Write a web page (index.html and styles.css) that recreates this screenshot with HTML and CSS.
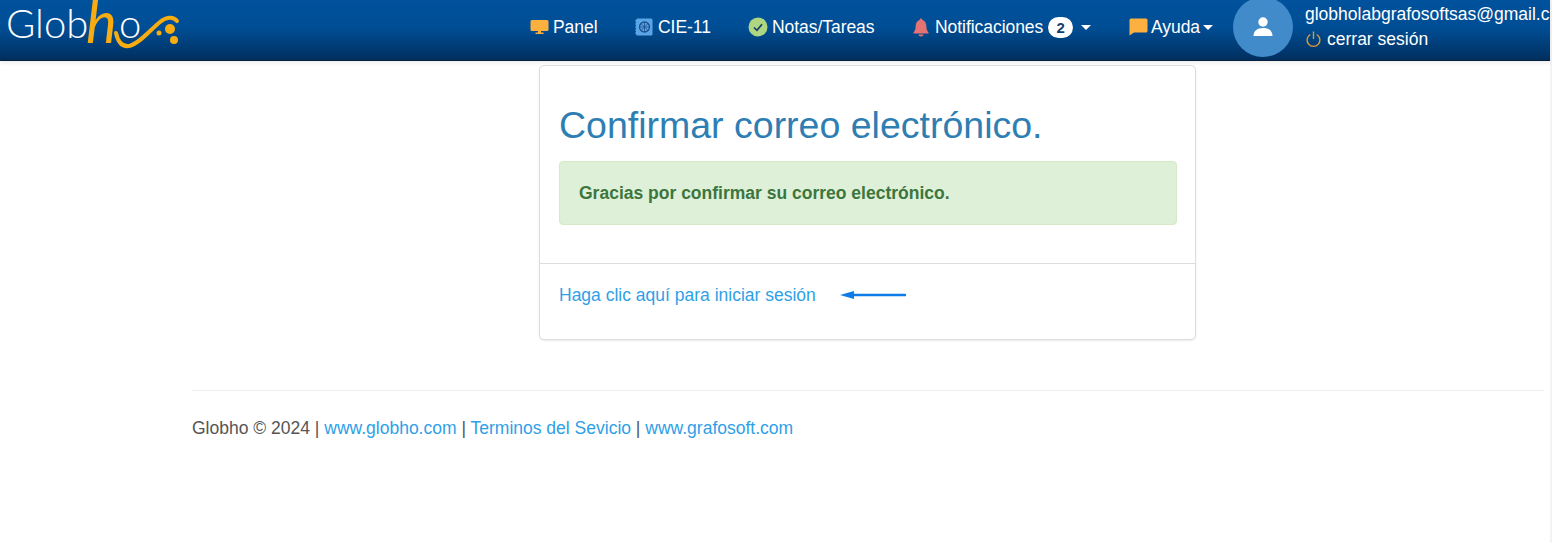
FILE: index.html
```html
<!DOCTYPE html>
<html lang="es">
<head>
  <meta charset="UTF-8">
  <title>Confirmar correo electrónico</title>
  <link rel="stylesheet" href="styles.css">
</head>
<body>

  <div class="page">

    <nav class="navbar">
      <a class="brand" href="#">
        <svg width="190" height="60" viewBox="0 0 190 60">
          <text class="brand-text" x="6" y="38">Glob</text>
          <text class="brand-text" x="119" y="38">o</text>
          <text class="brand-h" x="86" y="43">h</text>
          <path class="brand-swoosh" d="M116 33 C118 42 122 47 129 46 C139 44 150 30 160 22 C166 17 173 16 177 21"/>
          <circle class="brand-dot" cx="170" cy="29" r="5"/>
          <circle class="brand-dot" cx="159" cy="33" r="2.5"/>
          <circle class="brand-dot" cx="174" cy="40" r="4"/>
        </svg>
      </a>

      <ul class="menu">
        <li class="menu-item item-panel">
          <svg class="icon" width="19" height="16" viewBox="0 0 19 16"><path fill="#fbb040" d="M2 1h15a1.500 1.500 0 0 1 1.500 1.500v8a1.500 1.500 0 0 1-1.500 1.500H2a1.500 1.500 0 0 1-1.500-1.500v-8A1.500 1.500 0 0 1 2 1z"/><path fill="#fbb040" d="M8 12h3v1.500h2.500V15h-8v-1.500H8z"/></svg>
          Panel
        </li>
        <li class="menu-item item-cie">
          <svg class="icon" width="18" height="18" viewBox="0 0 18 18"><rect x="1" y="0.500" width="16.500" height="17" rx="1.500" fill="#5aa5e6"/><path d="M0 3h2M0 6h2M0 9h2M0 12h2M0 15h2" stroke="#5aa5e6" stroke-width="1"/><circle cx="9.500" cy="9" r="5" fill="none" stroke="#1c4f8c" stroke-width="1.300"/><path d="M4.500 9h10M9.500 4v10M6 5.500l7 7M13 5.500l-7 7" stroke="#1c4f8c" stroke-width="0.800"/></svg>
          CIE-11
        </li>
        <li class="menu-item item-notas">
          <svg class="icon" width="20" height="20" viewBox="0 0 20 20"><circle cx="10" cy="10" r="9.500" fill="#aed581"/><path d="M6 10.500l3 2.800 5-6" fill="none" stroke="#123f6e" stroke-width="1.700"/></svg>
          Notas/Tareas
        </li>
        <li class="menu-item item-notif">
          <svg class="icon icon-bell" width="16" height="19" viewBox="0 0 16 19"><path fill="#e57373" d="M8 0.500a1.300 1.300 0 0 1 1.300 1.400C12 2.600 13.300 5 13.300 8c0 3.500 1 5 2.200 6.500v1H0.500v-1C1.700 13 2.700 11.500 2.700 8c0-3 1.300-5.400 4-6.100A1.300 1.300 0 0 1 8 0.500z"/><path fill="#e57373" d="M5.500 16.500h5a2.500 2 0 0 1-5 0z"/></svg>
          Notificaciones
          <span class="badge">2</span>
          <span class="caret caret-notif"></span>
        </li>
        <li class="menu-item item-ayuda">
          <svg class="icon" width="19" height="18" viewBox="0 0 19 18"><path fill="#fbb040" d="M2 0.500h15A1.500 1.500 0 0 1 18.500 2v11a1.500 1.500 0 0 1-1.500 1.500H5L0.500 17.500V2A1.500 1.500 0 0 1 2 0.500z"/></svg>
          Ayuda<span class="caret"></span>
        </li>
      </ul>

      <div class="avatar">
        <svg width="20" height="20" viewBox="0 0 20 20"><circle cx="10" cy="5" r="4.700" fill="#fff"/><path fill="#fff" d="M0.500 19c0-5 3.500-8 9.500-8s9.500 3 9.500 8z"/></svg>
      </div>

      <div class="user">
        <div class="user-mail">globholabgrafosoftsas@gmail.com</div>
        <div class="user-exit">
          <svg width="15" height="17" viewBox="0 0 14 16"><path d="M4 3.300a6 6 0 1 0 6 0M7 0.500v7" fill="none" stroke="#d99a3c" stroke-width="1.300"/></svg>
          cerrar sesión
        </div>
      </div>
    </nav>

    <div class="container">
      <div class="card">
        <div class="card-body">
          <h1>Confirmar correo electrónico.</h1>
          <div class="alert">Gracias por confirmar su correo electrónico.</div>
        </div>
        <div class="card-footer">
          <a href="#">Haga clic aquí para iniciar sesión</a>
          <svg class="arrow" width="66" height="10" viewBox="0 0 66 10"><path d="M65 5H12" stroke="#0d7be8" stroke-width="2.600" stroke-linecap="round"/><path d="M0 5l14-4v8z" fill="#0d7be8"/></svg>
        </div>
      </div>

      <hr>

      <footer class="footer">
        Globho © 2024 | <a href="#">www.globho.com</a> | <a href="#">Terminos del Sevicio</a> | <a href="#">www.grafosoft.com</a>
      </footer>
    </div>

  </div>

</body>
</html>
```

FILE: styles.css
```css
* {
  box-sizing: border-box;
}

html, body {
  height: 100%;
}

body {
  margin: 0;
  background-color: #f3f3f3;
  font-family: "Liberation Sans", Arial, sans-serif;
  font-size: 17.5px;
  color: #555;
  overflow: hidden;
}

a {
  color: #2f9fe8;
  text-decoration: none;
}

.page {
  width: 1550px;
  height: 100%;
  background-color: #fff;
}

/* barra superior */
.navbar {
  display: flex;
  align-items: center;
  height: 61px;
  overflow: hidden;
  background: linear-gradient(to bottom, #00529c 0%, #004e95 45%, #003468 92%, #002d5c 100%);
  border-bottom: 1px solid #06213f;
  box-shadow: 0 2px 4px rgba(0, 0, 0, 0.08);
  color: #fff;
}

.brand {
  display: block;
  width: 190px;
  height: 60px;
  flex: none;
}

.brand-text {
  font-family: Lato, "Liberation Sans", sans-serif;
  font-weight: 300;
  font-size: 40px;
  fill: #fff;
}

.brand-h {
  font-family: Lato, "Liberation Sans", sans-serif;
  font-style: italic;
  font-weight: 400;
  font-size: 58px;
  fill: #f7ac12;
}

.brand-swoosh {
  fill: none;
  stroke: #f7ac12;
  stroke-width: 4;
  stroke-linecap: round;
}

.brand-dot {
  fill: #f7ac12;
}

.menu {
  display: flex;
  align-items: center;
  list-style: none;
  margin: 0;
  padding: 0 0 6px 340px;
  flex: none;
}

.menu-item {
  display: flex;
  align-items: center;
  gap: 4px;
  font-size: 17.5px;
  letter-spacing: -0.05px;
  white-space: nowrap;
}

.item-panel { width: 105px; }
.item-cie { width: 113px; gap: 5px; }
.item-notas { width: 165px; }
.item-notif { width: 216px; }
.item-ayuda { width: 104px; gap: 3px; }

.icon-bell {
  margin-right: 2px;
}

.badge {
  display: inline-block;
  min-width: 25px;
  height: 21px;
  line-height: 21px;
  margin-left: 1px;
  border-radius: 11px;
  background-color: #fff;
  color: #123f6e;
  font-size: 15px;
  font-weight: bold;
  text-align: center;
}

.caret {
  display: inline-block;
  width: 0;
  height: 0;
  margin-left: 0;
  border-top: 5px solid #fff;
  border-left: 5px solid transparent;
  border-right: 5px solid transparent;
}

.caret-notif {
  margin-left: 4px;
}

.avatar {
  display: flex;
  align-items: center;
  justify-content: center;
  flex: none;
  width: 60px;
  height: 60px;
  margin-top: -6px;
  border-radius: 50%;
  background-color: #428bca;
}

.user {
  flex: none;
  margin-left: 12px;
  margin-top: -8px;
  font-size: 17.5px;
  white-space: nowrap;
}

.user-mail {
  line-height: 26px;
}

.user-exit {
  display: flex;
  align-items: center;
  gap: 6px;
  line-height: 24px;
  margin-left: 1px;
}

/* contenido */
.container {
  padding: 4px 6px 0 192px;
}

.card {
  width: 657px;
  margin-left: 347px;
  background-color: #fff;
  border: 1px solid #ddd;
  border-radius: 5px;
  box-shadow: 0 1px 2px rgba(0, 0, 0, 0.08);
}

.card-body {
  padding: 37px 18px 38px 19px;
  border-bottom: 1px solid #ddd;
}

h1 {
  margin: 0 0 14px;
  font-size: 37.5px;
  font-weight: normal;
  line-height: 44px;
  color: #2e7eb3;
}

.alert {
  height: 64px;
  padding: 0 19px;
  line-height: 62px;
  background-color: #dff0d8;
  border: 1px solid #d6e9c6;
  border-radius: 4px;
  color: #3c763d;
  font-weight: bold;
}

.card-footer {
  display: flex;
  align-items: center;
  height: 75px;
  padding: 0 19px 13px;
}

.arrow {
  margin-left: 24px;
}

hr {
  height: 1px;
  margin: 50px 0 0;
  border: 0;
  background-color: #eee;
}

.footer {
  padding-top: 27px;
  line-height: 20px;
}
```
